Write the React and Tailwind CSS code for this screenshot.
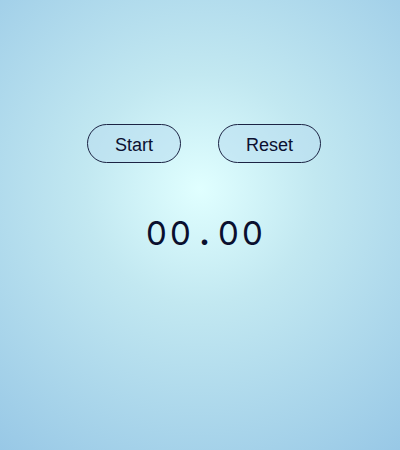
export default function App() {
  const chars = ["0", "0", ".", "0", "0"];
  return (
    <div className="w-[400px] h-[450px] bg-[radial-gradient(circle_at_50%_42%,#e0ffff_0%,#c2e8f1_35%,#98c8e6_100%)] flex flex-col items-center pl-[8px]">
      <div className="flex gap-[37px] mt-[124px]">
        <button className="h-[39px] px-[27px] pt-[3px] rounded-full border border-[#1c2444] bg-[#b8dcef]/50 text-[18px] text-[#0b1030] font-['Liberation_Sans',Arial,sans-serif]">Start</button>
        <button className="h-[39px] px-[27px] pt-[3px] rounded-full border border-[#1c2444] bg-[#b8dcef]/50 text-[18px] text-[#0b1030] font-['Liberation_Sans',Arial,sans-serif]">Reset</button>
      </div>
      <div className="mt-[50px] ml-[1px] flex text-[33px] leading-[40px] text-[#0a0f2e] font-['Inter',sans-serif]">
        {chars.map((c, i) => (
          <span key={i} className={c === "." ? "w-[24px] text-center font-bold" : "w-[24px] text-center"}>{c}</span>
        ))}
      </div>
    </div>
  );
}
